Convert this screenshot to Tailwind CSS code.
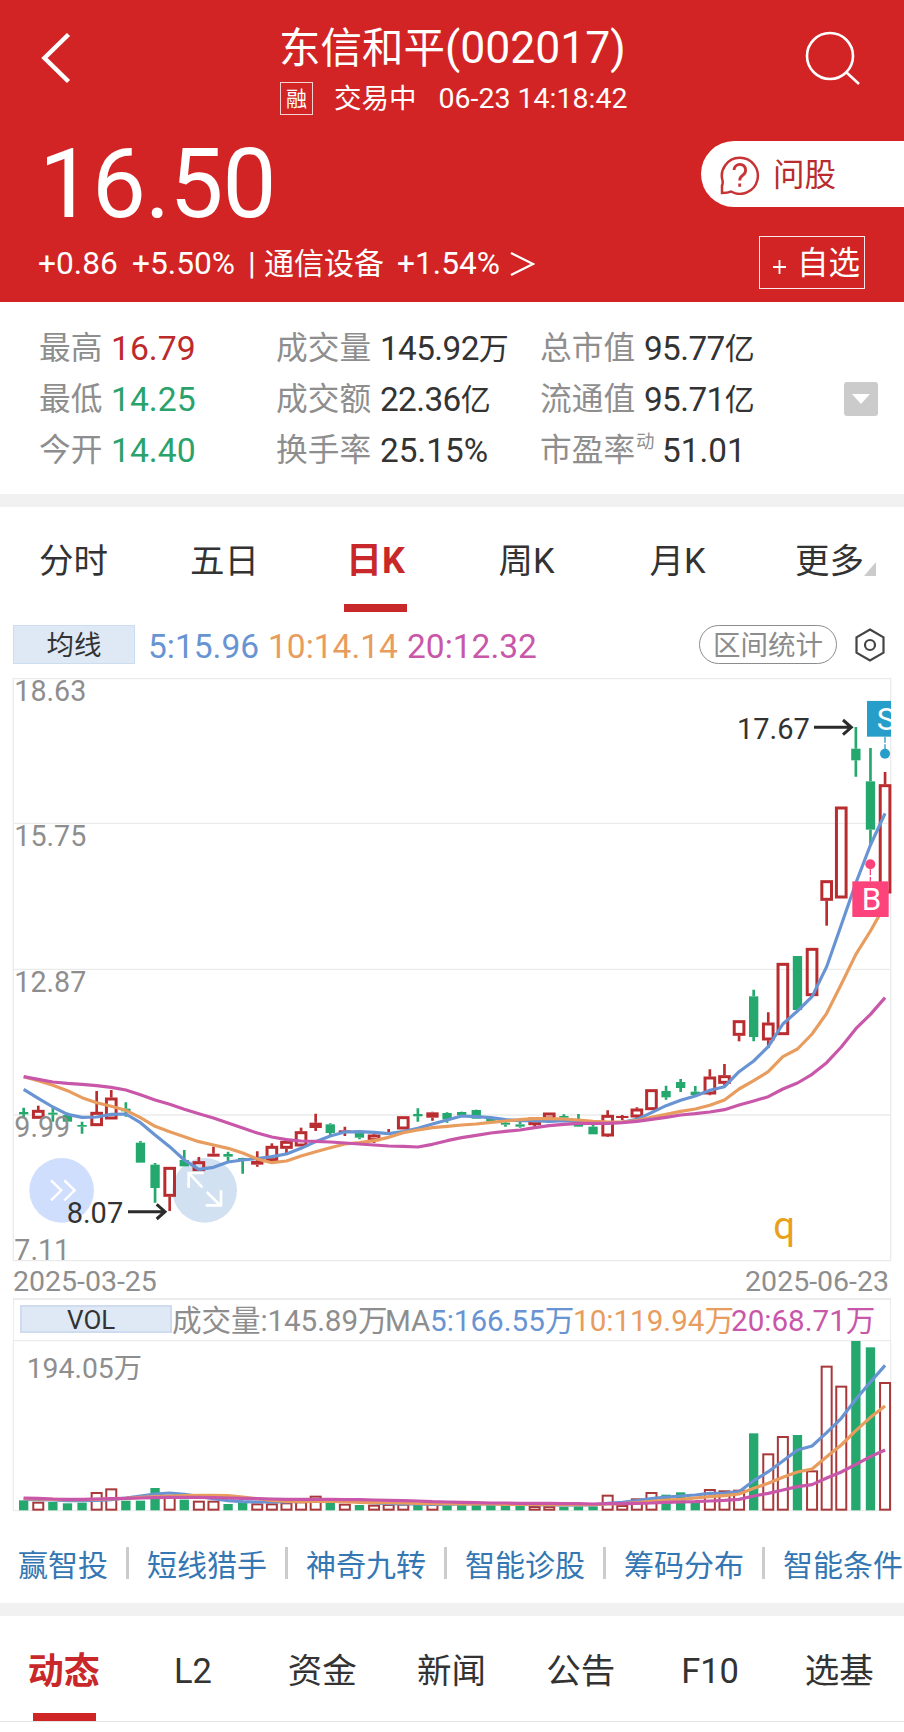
<!DOCTYPE html>
<html lang="zh-CN">
<head>
    <meta charset="UTF-8">
    <meta name="viewport" content="width=device-width, initial-scale=1.0">
    <title>东信和平(002017)</title>
    <script src="https://cdn.jsdelivr.net/npm/@tailwindcss/browser@4"></script>
</head>
<body class="bg-white text-[#333] font-[Roboto,'Noto_Sans_CJK_SC',sans-serif] whitespace-nowrap">
<div class="w-[904px] h-[1732px] overflow-hidden flex flex-col">

    <!-- Header -->
    <header class="h-[302px] shrink-0 bg-[#d22425] text-white flex flex-col">
        <div class="h-[124px] shrink-0 flex pl-[40px] pr-[43px]">
            <svg class="w-[32px] h-[52px] mt-[32px]" viewBox="0 0 32 52" fill="none" stroke="#fff" stroke-width="4.5"><path d="M28.500 2.500 4.500 26 28.500 49.500"/></svg>
            <div class="ml-[208px] w-[360px]">
                <h1 class="mt-[22px] h-[52px] leading-[52px] text-[41.500px] -ml-[1px]">东信和平<span class="text-[44.500px]">(002017)</span></h1>
                <div class="mt-[8px] h-[33px] flex items-center text-[28.500px] leading-[33px]">
                    <span class="size-[33px] border border-white/80 text-[21px] leading-[32px] text-center">融</span>
                    <span class="ml-[21px] text-[27.500px]">交易中</span>
                    <span class="ml-[22px]">06-23 14:18:42</span>
                </div>
            </div>
            <svg class="w-[56px] h-[56px] mt-[30px] ml-auto" viewBox="0 0 56 56" fill="none" stroke="#fff" stroke-width="2.600"><circle cx="25" cy="26" r="23"/><path d="M41 42 54 54"/></svg>
        </div>
        <div class="h-[104px] shrink-0 flex justify-between">
            <div class="pl-[39px] pt-[6px] text-[96px] leading-[108px] tracking-[-0.900px]">16.50</div>
            <div class="mt-[17px] w-[203px] h-[66px] bg-white rounded-l-full flex items-center text-[#b92c2d]">
                <svg class="ml-[18px] w-[41px] h-[41px]" viewBox="0 0 41 41" fill="none" stroke="#c73436" stroke-width="2.500"><path d="M3 39V31.500Q4 30 3.600 27A18 18 0 1 1 12 37.500Q9 39 3 39Z"/><path d="M15 16a5.800 5.800 0 1 1 9 5c-2.500 1.700-3.300 2.500-3.300 5.500M20.700 29.500v3.200" stroke-width="2.800"/></svg>
                <span class="ml-[13px] mt-[3px] text-[31.500px]">问股</span>
            </div>
        </div>
        <div class="h-[74px] flex items-center justify-between pl-[38px] pr-[39px] text-[31.700px]">
            <div class="flex items-center leading-[40px] -mt-[3px]">
                <span class="w-[94px]">+0.86</span>
                <span class="w-[116px]">+5.50%</span>
                <span class="w-[16px]">|</span>
                <span class="w-[133px] text-[30px]">通信设备</span>
                <span>+1.54%</span>
                <svg class="w-[26px] h-[26px] ml-[9px]" viewBox="0 0 26 26" fill="none" stroke="#fff" stroke-width="2.200"><path d="M2 2 24 13 2 24"/></svg>
            </div>
            <div class="w-[106px] h-[53px] -mt-[5px] border border-white/90 flex items-center justify-end pr-[4px] pt-[3px] text-[31.500px]">
                <svg class="w-[13px] h-[14px] mt-[5px] mr-[11px]" viewBox="0 0 13 14" stroke="#fff" stroke-width="1.800"><path d="M0 7H13M6.500 0V14"/></svg>自选
            </div>
        </div>
    </header>

    <!-- Quote details -->
    <section class="h-[192px] shrink-0 pt-[21px] pl-[39px] pr-[26px] flex items-start text-[33.300px] leading-[51px]">
        <div class="w-[237px]">
            <div class="flex h-[51px]"><span class="w-[72px] text-[31.700px] text-[#8e8e8e]">最高</span><span class="text-[33.700px] text-[#bd2a2c]">16.79</span></div>
            <div class="flex h-[51px]"><span class="w-[72px] text-[31.700px] text-[#8e8e8e]">最低</span><span class="text-[33.700px] text-[#2aa26b]">14.25</span></div>
            <div class="flex h-[51px]"><span class="w-[72px] text-[31.700px] text-[#8e8e8e]">今开</span><span class="text-[33.700px] text-[#2aa26b]">14.40</span></div>
        </div>
        <div class="w-[264px]">
            <div class="flex h-[51px]"><span class="w-[104px] text-[31.700px] text-[#8e8e8e]">成交量</span><span class="tracking-[-0.600px]">145.92</span><span class="text-[30px]">万</span></div>
            <div class="flex h-[51px]"><span class="w-[104px] text-[31.700px] text-[#8e8e8e]">成交额</span><span class="tracking-[-0.600px]">22.36</span><span class="text-[30px]">亿</span></div>
            <div class="flex h-[51px]"><span class="w-[104px] text-[31.700px] text-[#8e8e8e]">换手率</span><span>25.15%</span></div>
        </div>
        <div class="w-[300px]">
            <div class="flex h-[51px]"><span class="w-[104px] text-[31.700px] text-[#8e8e8e]">总市值</span><span class="tracking-[-0.600px]">95.77</span><span class="text-[30px]">亿</span></div>
            <div class="flex h-[51px]"><span class="w-[104px] text-[31.700px] text-[#8e8e8e]">流通值</span><span class="tracking-[-0.600px]">95.71</span><span class="text-[30px]">亿</span></div>
            <div class="flex h-[51px]"><span class="w-[96px] text-[31.700px] text-[#8e8e8e]">市盈率</span><span class="w-[26px] text-[18.500px] leading-[35px] text-[#8e8e8e]">动</span><span>51.01</span></div>
        </div>
        <div class="ml-auto mt-[59px] w-[34px] h-[34px] rounded-[3px] bg-[#cbcbcb] flex items-center justify-center">
            <svg class="w-[18px] h-[10px]" viewBox="0 0 18 10" fill="#fff"><path d="M0 0H18L9 10Z"/></svg>
        </div>
    </section>
    <div class="h-[13px] shrink-0 bg-[#f1f1f1]"></div>

    <!-- Period tabs -->
    <nav class="h-[118px] -ml-[2px] shrink-0 grid grid-cols-6 text-[34.500px] leading-[109px] text-center">
        <span>分时</span>
        <span>五日</span>
        <div class="flex flex-col items-center font-bold text-[#c9282a]"><span class="h-[97px] text-[36px]">日K</span><i class="w-[63px] h-[8px] bg-[#c9282a]"></i></div>
        <span>周K</span>
        <span>月K</span>
        <div class="flex justify-center pl-[14px]">更多<svg class="w-[12px] h-[14px] mt-[55px]" viewBox="0 0 12 14" fill="#cbcbcb"><path d="M12 0V14H0Z"/></svg></div>
    </nav>

    <!-- Moving average legend -->
    <div class="h-[53px] shrink-0 flex items-start pl-[13px] pr-[19px] text-[33.500px] leading-[43px]">
        <div class="w-[122px] h-[39px] bg-[#dfe9f5] border border-[#cbddee] text-[27.500px] leading-[40px] text-center">均线</div>
        <span class="ml-[13px] w-[120px] text-[#6894d3]">5:15.96</span>
        <span class="w-[139px] text-[#e89c5d]">10:14.14</span>
        <span class="text-[#c957a9]">20:12.32</span>
        <div class="ml-auto w-[138px] h-[39px] rounded-full border border-[#8c8c8c] text-[#8c8c8c] text-[27.500px] leading-[40px] text-center">区间统计</div>
        <svg class="ml-[18px] mt-[3px] w-[30px] h-[34px]" viewBox="0 0 30 34" fill="none" stroke="#444" stroke-width="2.200"><path d="M15 1.500 28.500 9.300V24.700L15 32.500 1.500 24.700V9.300Z"/><circle cx="15" cy="17" r="5"/></svg>
    </div>

    <!-- Daily K chart -->
    <svg class="w-[904px] h-[584px] shrink-0 overflow-visible" viewBox="0 -1146 2712 1752" fill="none">
        <g stroke="#ebebeb" stroke-width="4">
            <path d="M40-1144H2672V602H40ZM40-710H2672M40-272H2672M40 165H2672"/>
        </g>
        <circle cx="185" cy="391" r="97" fill="#d0defd"/>
        <path d="M153 361 184 391 153 421M193 361 224 391 193 421" stroke="#fff" stroke-width="7"/>
        <circle cx="614" cy="391" r="97" fill="#d1e1f1"/>
        <g id="candles"></g>
        <g fill="#8e8e8e" font-size="86">
            <text x="43" y="-1077">18.63</text>
            <text x="43" y="-642">15.75</text>
            <text x="43" y="-203">12.87</text>
            <text x="43" y="230">9.99</text>
            <text x="43" y="600">7.11</text>
        </g>
        <path d="M607 382 568 341M566 383V339H611M620 396 660 435M663 391V436H617" stroke="#fff" stroke-width="8"/>
        <g fill="#333" font-size="87">
            <text x="200" y="488">8.07</text>
            <text x="2211" y="-963">17.67</text>
        </g>
        <path d="M384 455H494M470 433 495 455 470 477M2442-998H2553M2529-1020 2554-998 2529-976" stroke="#2b2b2b" stroke-width="9"/>
        <g id="priceLines" stroke-width="9.5" stroke-linejoin="round"></g>
        <rect x="2557" y="-536" width="109" height="107" fill="#fd437c"/>
        <circle cx="2611" cy="-587" r="15" fill="#fd437c"/>
        <path d="M2611-572V-536" stroke="#fd437c" stroke-width="4" stroke-dasharray="18 5"/>
        <text x="2585" y="-449" fill="#fff" font-size="94">B</text>
        <svg x="2601" y="-1078" width="72" height="176" viewBox="0 0 72 176">
            <rect width="109" height="108" fill="#279dc9"/>
            <text x="29" y="88" fill="#fff" font-size="94">S</text>
            <path d="M54 108V145" stroke="#279dc9" stroke-width="4" stroke-dasharray="18 5"/>
            <circle cx="54" cy="159" r="15" fill="#279dc9"/>
        </svg>
        <text x="2320" y="537" fill="#e9a01c" font-size="115">q</text>
    </svg>
    <div class="h-[36px] shrink-0 flex justify-between pl-[13px] pr-[15px] text-[28.500px] leading-[40px] text-[#8e8e8e]">
        <span>2025-03-25</span><span>2025-06-23</span>
    </div>

    <!-- Volume -->
    <div class="ml-[13px] w-[878px] h-[42px] shrink-0 border-x border-t-2 border-[#ececec] flex items-start pl-[6px] pt-[5px] text-[29.600px] leading-[33px]">
        <div class="w-[152px] h-[28px] bg-[#dfe9f6] border-2 border-[#cfdcf0] pl-[45px] text-[26px] leading-[26px]">VOL</div>
        <span class="w-[213px] text-[#8e8e8e] tracking-[-0.100px]">成交量:145.89万</span>
        <span class="w-[45px] text-[#8e8e8e]">MA</span>
        <span class="w-[143px] text-[#6894d3]">5:166.55万</span>
        <span class="w-[158px] text-[#e89c5d]">10:119.94万</span>
        <span class="text-[#c957a9]">20:68.71万</span>
    </div>
    <svg class="w-[904px] h-[172px] shrink-0" viewBox="0 -360 2712 516" fill="none">
        <path d="M40-358H2672V152H40Z" stroke="#ececec" stroke-width="4"/>
        <text x="80" y="-247" fill="#8e8e8e" font-size="85">194.05万</text>
        <g id="volumes"></g>
        <g id="volumeLines" stroke-width="9.5" stroke-linejoin="round"></g>
    </svg>

    <!-- Tools -->
    <div class="h-[91px] shrink-0 pl-[18px] pt-[35px] flex items-start text-[30px] leading-[37px] text-[#3577b3]">
        <span class="w-[108px] shrink-0">赢智投</span>
        <span class="w-[159px] shrink-0 flex"><i class="w-[3px] h-[32px] mr-[18px] bg-[#ccc]"></i>短线猎手</span>
        <span class="w-[159px] shrink-0 flex"><i class="w-[3px] h-[32px] mr-[18px] bg-[#ccc]"></i>神奇九转</span>
        <span class="w-[159px] shrink-0 flex"><i class="w-[3px] h-[32px] mr-[18px] bg-[#ccc]"></i>智能诊股</span>
        <span class="w-[159px] shrink-0 flex"><i class="w-[3px] h-[32px] mr-[18px] bg-[#ccc]"></i>筹码分布</span>
        <span class="w-[159px] shrink-0 flex"><i class="w-[3px] h-[32px] mr-[18px] bg-[#ccc]"></i>智能条件</span>
    </div>
    <div class="h-[13px] shrink-0 bg-[#f1f1f1]"></div>

    <!-- Bottom tabs -->
    <nav class="h-[106px] -ml-[1px] shrink-0 border-b border-[#e4e4e4] grid grid-cols-7 text-[34.500px] leading-[110px] text-center">
        <div class="flex flex-col items-center font-bold text-[#c9282a]"><span class="h-[97px] text-[36px] leading-[112px]">动态</span><i class="w-[63px] h-[8px] ml-[2px] bg-[#d02526]"></i></div>
        <span>L2</span>
        <span>资金</span>
        <span>新闻</span>
        <span>公告</span>
        <span>F10</span>
        <span>选基</span>
    </nav>
</div>

<script>
    const RED = '#b92d30', GREEN = '#24a86e';
    const x = i => 71 + i * 43.8;

    // [type, high, body top, body bottom, low]  r = hollow, f = filled red, g = green
    const candles = [
        ['g',143,156,163,175],['r',137,150,176,176],['g',143,158,164,185],['g',158,165,185,185],['g',185,195,200,221],
        ['r',93,156,198,198],['r',90,113,178,178],['g',127,146,154,170],['g',243,248,308,308],['g',309,314,384,428],
        ['r',321,321,410,453],['g',270,300,319,319],['r',291,304,333,333],['f',260,281,290,290],['g',275,282,290,303],
        ['g',293,294,299,341],['f',274,303,314,320],['r',250,258,303,303],['r',235,243,266,280],['r',203,214,259,259],
        ['f',161,188,204,213],['g',190,193,219,226],['f',200,211,216,228],['g',215,219,233,238],['r',221,224,243,249],
        ['f',207,216,221,221],['r',169,169,208,208],['g',145,162,169,185],['f',155,157,173,182],['g',157,159,178,188],
        ['g',155,156,166,166],['g',149,150,176,176],['g',176,176,185,185],['g',186,188,194,200],['g',185,193,200,203],
        ['r',173,173,195,200],['r',158,158,178,178],['g',163,168,173,175],['g',162,193,200,200],['g',195,200,223,223],
        ['r',151,165,229,231],['f',165,168,174,181],['r',142,146,172,174],['r',88,88,150,150],['g',77,93,112,119],
        ['g',57,66,84,96],['g',78,95,105,105],['r',28,50,103,106],['r',12,46,71,76],['r',-119,-119,-73,-56],
        ['g',-211,-191,-69,-56],['r',-143,-112,-59,-36],['r',-291,-291,-75,-75],['g',-312,-312,-150,-150],['r',-336,-336,-192,-192],
        ['r',-539,-539,-478,-403],['r',-760,-760,-485,-485],['g',-999,-934,-899,-850],['g',-936,-836,-691,-645],['r',-864,-827,-500,-500]
    ];
    document.getElementById('candles').innerHTML = candles.map(([t, h, a, b, l], i) => {
        const c = t === 'g' ? GREEN : RED;
        const wick = `<path d="M${x(i)} ${h}V${a}M${x(i)} ${b}V${l}" stroke="${c}" stroke-width="8"/>`;
        const w = t === 'g' ? 28 : 37;
        return wick + (t === 'r'
            ? `<rect x="${x(i) - 14.5}" y="${a + 4}" width="29" height="${b - a - 8}" stroke="${c}" stroke-width="9"/>`
            : `<rect x="${x(i) - w / 2}" y="${a}" width="${w}" height="${b - a}" fill="${c}"/>`);
    }).join('');

    // volume bars, top edge of each; negative values reach above the label row
    const tops = [
        121,125,126,130,128,96,85,122,122,84,106,119,122,122,132,128,130,130,127,124,
        107,126,131,135,134,132,131,135,131,134,132,134,134,135,137,138,138,140,139,139,
        104,135,115,96,104,97,125,87,91,89,-80,-20,-72,-75,31,-283,-223,-357,-338,-234
    ];
    document.getElementById('volumes').innerHTML = tops.map((t, i) => {
        const up = 'rf'.includes(candles[i][0]);
        return up
            ? `<rect x="${x(i) - 15}" y="${t + 3}" width="30" height="${146 - t}" stroke="#a8383a" stroke-width="6"/>`
            : `<rect x="${x(i) - 14}" y="${t}" width="28" height="${151 - t}" fill="${GREEN}"/>`;
    }).join('');

    const draw = (id, lines) => {
        const colors = ['#6894d3', '#e89c5d', '#c957a9'];
        document.getElementById(id).innerHTML = lines.map((ys, n) =>
            `<polyline points="${ys.map((y, i) => x(i) + ',' + y).join(' ')}" stroke="${colors[n]}"/>`).join('');
    };
    draw('priceLines', [
        [88,115,141,163,172,171,163,162,188,225,260,300,328,322,306,300,296,290,282,265,245,228,216,215,217,221,215,205,192,180,
         168,170,173,179,182,182,184,182,184,186,188,187,178,158,137,121,108,91,80,35,3,-40,-108,-147,-190,-280,-405,-531,-645,-740],
        [50,62,76,92,113,128,139,151,173,199,215,230,245,255,265,279,297,308,303,288,275,263,252,248,242,232,218,210,203,199,
         195,192,187,183,179,176,176,177,180,184,186,186,182,172,163,154,147,136,120,87,62,35,-10,-33,-78,-140,-227,-317,-387,-465],
        [50,58,66,70,73,77,82,90,104,120,133,148,161,174,189,204,219,231,239,243,244,246,249,252,255,258,259,261,253,242,
         233,226,219,214,210,203,197,193,190,190,190,188,184,178,172,165,161,156,149,135,123,110,87,69,43,8,-39,-94,-137,-187]
    ]);
    draw('volumeLines', [
        [118,119,120,122,122,121,119,114,108,102,99,103,109,116,122,125,126,126,126,124,121,121,122,126,129,131,132,132,133,133,
         132,132,132,132,133,134,135,135,135,135,130,127,122,116,111,108,105,100,99,95,62,35,3,-30,-42,-82,-125,-182,-234,-284],
        [116,117,118,119,119,118,117,115,112,110,108,107,106,106,107,111,116,121,124,125,124,124,125,127,128,128,129,130,131,131,
         132,132,132,133,133,133,134,134,134,134,132,131,128,124,120,118,114,110,107,102,85,70,52,36,27,-10,-45,-88,-128,-162],
        [114,115,117,118,118,117,116,115,114,113,112,112,112,113,114,115,116,117,118,118,118,118,119,119,120,121,122,123,125,126,
         127,128,129,129,130,130,130,131,131,132,131,131,130,129,127,126,125,123,121,118,108,100,90,80,74,54,36,13,-10,-30]
    ]);
</script>
</body>
</html>
